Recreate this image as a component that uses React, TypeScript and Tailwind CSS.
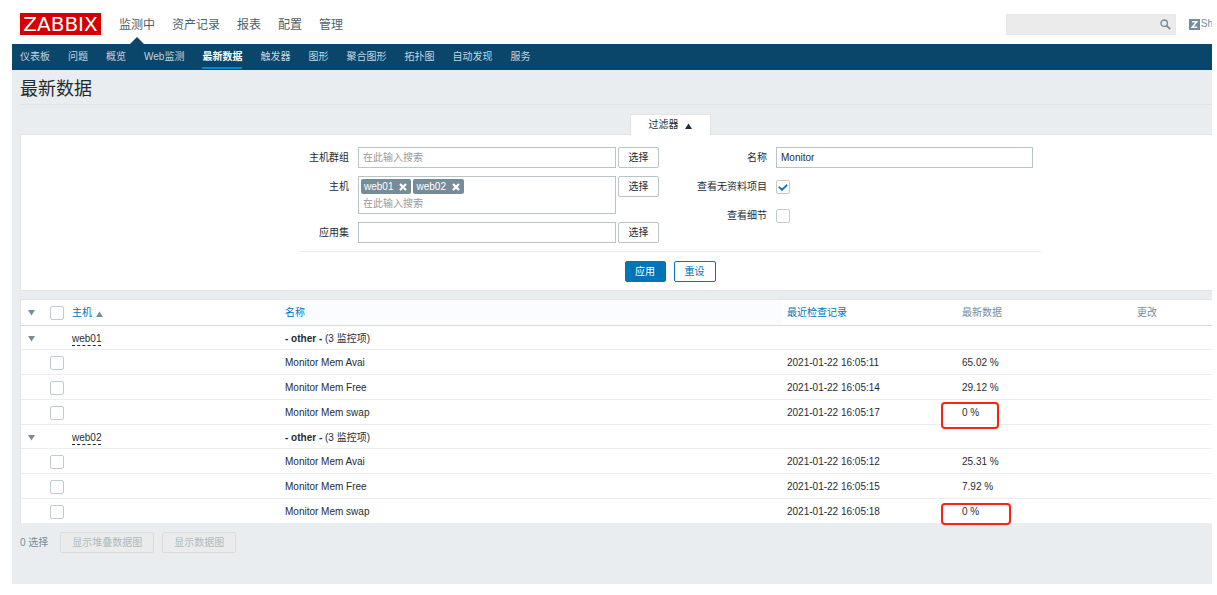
import { ReactNode, useState } from "react";
import clsx from "clsx";

const mainMenu = ["监测中", "资产记录", "报表", "配置", "管理"];

const subMenu = [
  "仪表板",
  "问题",
  "概览",
  "Web监测",
  "最新数据",
  "触发器",
  "图形",
  "聚合图形",
  "拓扑图",
  "自动发现",
  "服务",
];

interface Item {
  name: string;
  lastCheck: string;
  value: string;
  mark?: string;
}

interface HostGroup {
  host: string;
  items: Item[];
}

const groups: HostGroup[] = [
  {
    host: "web01",
    items: [
      { name: "Monitor Mem Avai", lastCheck: "2021-01-22 16:05:11", value: "65.02 %" },
      { name: "Monitor Mem Free", lastCheck: "2021-01-22 16:05:14", value: "29.12 %" },
      {
        name: "Monitor Mem swap",
        lastCheck: "2021-01-22 16:05:17",
        value: "0 %",
        mark: "-left-4 top-0.5 h-[27px] w-[58px]",
      },
    ],
  },
  {
    host: "web02",
    items: [
      { name: "Monitor Mem Avai", lastCheck: "2021-01-22 16:05:12", value: "25.31 %" },
      { name: "Monitor Mem Free", lastCheck: "2021-01-22 16:05:15", value: "7.92 %" },
      {
        name: "Monitor Mem swap",
        lastCheck: "2021-01-22 16:05:18",
        value: "0 %",
        mark: "-left-4 top-1 h-[22px] w-[70px]",
      },
    ],
  },
];

interface CheckboxProps {
  id?: string;
  label?: string;
  defaultChecked?: boolean;
}

function Checkbox({ id, label, defaultChecked }: CheckboxProps) {
  return (
    <span className="relative block size-3.5">
      <input
        id={id}
        type="checkbox"
        aria-label={label}
        defaultChecked={defaultChecked}
        className="peer block size-3.5 appearance-none rounded-xs border border-[#c0cbd1] bg-white"
      />
      <svg
        viewBox="0 0 14 14"
        className="pointer-events-none absolute inset-0 hidden size-3.5 peer-checked:block"
      >
        <path d="M2.8 6.8 6 9.7 11.2 4.9" fill="none" stroke="#0275b8" strokeWidth="1.8" />
      </svg>
    </span>
  );
}

function Triangle({ up, className }: { up?: boolean; className?: string }) {
  return (
    <svg viewBox="0 0 7 6" className={clsx("h-1.5 w-[7px] fill-current", className)}>
      <path d={up ? "M3.5 0.5 7 6H0Z" : "M0 0H7L3.5 5.5Z"} />
    </svg>
  );
}

function SelectButton() {
  return (
    <button
      type="button"
      className="h-[21px] w-[41px] rounded-xs border border-[#b8c4ca] bg-white text-[#1f2c33]"
    >
      选择
    </button>
  );
}

function HostTag({ name }: { name: string }) {
  return (
    <span className="flex h-[15px] items-center gap-1.5 rounded-xs bg-[#768d99] pr-1 pl-[3px] text-white">
      {name}
      <button type="button" aria-label={name}>
        <svg viewBox="0 0 8 8" className="size-2">
          <path d="M1 1 7 7M7 1 1 7" stroke="white" strokeWidth="2.2" />
        </svg>
      </button>
    </span>
  );
}

function FieldRow({ id, label, children }: { id: string; label: string; children: ReactNode }) {
  return (
    <div className="flex gap-[9px]">
      <label htmlFor={id} className="flex h-[21px] flex-1 items-center justify-end">
        {label}
      </label>
      {children}
    </div>
  );
}

function Header() {
  return (
    <header>
      <div className="flex h-11 items-center bg-white px-2 pt-1">
        <a
          href="#"
          className="mr-[18px] flex h-[22px] w-[81px] items-center justify-center bg-[#d40000] font-['DejaVu_Sans'] text-xl leading-none text-white"
        >
          ZABBIX
        </a>
        <nav className="flex h-10 gap-[17px] text-xs text-[#4f5f69]">
          {mainMenu.map((item, i) => (
            <a key={item} href="#" className="relative flex items-center pt-0.5">
              {item}
              {i === 0 && (
                <svg
                  viewBox="0 0 14 7"
                  className="absolute bottom-0 left-1/2 h-[7px] w-3.5 -translate-x-1/2"
                >
                  <path d="M7 0 14 7H0Z" fill="#0a466a" />
                </svg>
              )}
            </a>
          ))}
        </nav>
        <div className="mr-[107px] ml-auto flex items-center gap-[13px]">
          <form className="relative">
            <input
              type="text"
              aria-label="搜索"
              className="block h-[21px] w-[170px] border border-[#e8e8e8] bg-[#ebebeb] pr-6 pl-1"
            />
            <button type="button" aria-label="搜索" className="absolute top-[5px] right-[5px]">
              <svg viewBox="0 0 11 11" className="size-[11px]" fill="none" stroke="#768d99">
                <circle cx="4.2" cy="4.2" r="3.2" strokeWidth="1.4" />
                <path d="M6.6 6.6 10.2 10.2" strokeWidth="1.8" />
              </svg>
            </button>
          </form>
          <a href="#" className="flex items-center gap-px text-[#768d99]">
            <svg viewBox="0 0 11 11" className="size-[11px]">
              <rect width="11" height="11" fill="#768d99" />
              <path d="M3 2.8H7.8L3.2 8.2H8.2" fill="none" stroke="white" strokeWidth="1.5" />
            </svg>
            Sh
          </a>
        </div>
      </div>
      <nav className="flex h-[26px] gap-[18px] bg-[#0a466a] px-2 text-[#c3d5e0]">
        {subMenu.map((item) => (
          <a
            key={item}
            href="#"
            className={clsx(
              "mb-px flex items-center border-b-2 pt-0.5",
              item === "最新数据"
                ? "border-[#0a84cf] font-bold text-white"
                : "border-transparent"
            )}
          >
            {item}
          </a>
        ))}
      </nav>
    </header>
  );
}

function Filter() {
  const [name, setName] = useState("Monitor");
  const [open, setOpen] = useState(true);

  return (
    <section>
      <div className="flex justify-center">
        <button
          type="button"
          onClick={() => setOpen(!open)}
          className="-mb-px flex h-[21px] w-[81px] items-center justify-center gap-1.5 border border-b-0 border-[#dfe4e7] bg-white"
        >
          过滤器
          <Triangle up={open} className="mt-0.5" />
        </button>
      </div>
      {open && (
        <form className="border border-[#dfe4e7] bg-white pt-3 pb-2">
          <div className="mx-auto flex w-[742px] justify-between border-b border-[#ebeef0] pr-2 pb-2">
            <div className="flex w-[360px] flex-col gap-2">
              <FieldRow id="groups" label="主机群组">
                <div className="flex gap-0.5">
                  <input
                    id="groups"
                    type="text"
                    placeholder="在此输入搜索"
                    className="h-[21px] w-[258px] border border-[#b8c4ca] px-1 placeholder:text-[#999]"
                  />
                  <SelectButton />
                </div>
              </FieldRow>
              <FieldRow id="hosts" label="主机">
                <div className="flex items-start gap-0.5">
                  <div className="h-[38px] w-[258px] border border-[#b8c4ca] pt-0.5">
                    <div className="flex gap-0.5 px-0.5">
                      <HostTag name="web01" />
                      <HostTag name="web02" />
                    </div>
                    <input
                      id="hosts"
                      type="text"
                      placeholder="在此输入搜索"
                      className="block h-[18px] w-full px-1 placeholder:text-[#999]"
                    />
                  </div>
                  <SelectButton />
                </div>
              </FieldRow>
              <FieldRow id="application" label="应用集">
                <div className="flex gap-0.5">
                  <input
                    id="application"
                    type="text"
                    className="h-[21px] w-[258px] border border-[#b8c4ca] px-1"
                  />
                  <SelectButton />
                </div>
              </FieldRow>
            </div>
            <div className="flex w-[340px] flex-col gap-2">
              <FieldRow id="name" label="名称">
                <input
                  id="name"
                  type="text"
                  value={name}
                  onChange={(e) => setName(e.target.value)}
                  className="h-[21px] w-[257px] border border-[#b8c4ca] px-1"
                />
              </FieldRow>
              <FieldRow id="without-data" label="查看无资料项目">
                <div className="flex w-[257px] items-center">
                  <Checkbox id="without-data" defaultChecked />
                </div>
              </FieldRow>
              <FieldRow id="details" label="查看细节">
                <div className="flex w-[257px] items-center">
                  <Checkbox id="details" />
                </div>
              </FieldRow>
            </div>
          </div>
          <div className="flex justify-center gap-2 pt-[9px]">
            <button
              type="button"
              className="h-[21px] w-[41px] rounded-xs border border-[#0275b8] bg-[#0275b8] text-white"
            >
              应用
            </button>
            <button
              type="button"
              className="h-[21px] w-[42px] rounded-xs border border-[#0275b8] bg-white text-[#0275b8]"
            >
              重设
            </button>
          </div>
        </form>
      )}
    </section>
  );
}

function DataTable() {
  return (
    <table className="w-full table-fixed border-separate border-spacing-0 border border-b-0 border-[#dfe4e7] bg-white text-left [&_td]:border-b [&_td]:border-[#ebeef0] [&_td]:px-[5px] [&_td]:pt-0.5 [&_td]:pb-0 [&_th]:border-b [&_th]:border-[#d5dce0] [&_th]:px-[5px] [&_th]:py-0 [&_th]:font-normal">
      <colgroup>
        <col className="w-6" />
        <col className="w-[22px]" />
        <col className="w-[213px]" />
        <col />
        <col className="w-[175px]" />
        <col className="w-[175px]" />
        <col className="w-[187px]" />
      </colgroup>
      <thead>
        <tr className="h-[26px] text-[#768d99]">
          <th>
            <Triangle className="ml-0.5" />
          </th>
          <th>
            <Checkbox label="全选" />
          </th>
          <th>
            <a href="#" className="flex items-center gap-1 text-[#0275b8]">
              主机
              <Triangle up className="mt-0.5 text-[#768d99]" />
            </a>
          </th>
          <th className="bg-[#fafcff]">
            <a href="#" className="text-[#0275b8]">
              名称
            </a>
          </th>
          <th>
            <a href="#" className="text-[#0275b8]">
              最近检查记录
            </a>
          </th>
          <th>最新数据</th>
          <th>更改</th>
        </tr>
      </thead>
      {groups.map((group) => (
        <tbody key={group.host}>
          <tr className="h-6">
            <td>
              <button type="button" aria-label={group.host} className="block text-[#768d99]">
                <Triangle className="ml-0.5" />
              </button>
            </td>
            <td />
            <td>
              <a href="#" className="inline-block border-b border-dashed border-[#1f2c33] leading-3">
                {group.host}
              </a>
            </td>
            <td colSpan={4}>
              <b>- other -</b> ({group.items.length} 监控项)
            </td>
          </tr>
          {group.items.map((item) => (
            <tr key={item.name} className="h-[25px]">
              <td />
              <td>
                <Checkbox label={item.name} />
              </td>
              <td />
              <td>{item.name}</td>
              <td>{item.lastCheck}</td>
              <td className="relative">
                {item.value}
                {item.mark && (
                  <span
                    className={clsx("absolute z-10 rounded-sm border-2 border-[#fd2212]", item.mark)}
                  />
                )}
              </td>
              <td />
            </tr>
          ))}
        </tbody>
      ))}
    </table>
  );
}

export default function App() {
  return (
    <div className="mr-[5px] ml-3 overflow-hidden font-['Liberation_Sans','Noto_Sans_CJK_SC',sans-serif] text-[10px] leading-[14px] text-[#1f2c33]">
      {/* the page keeps its minimum width and is cut off in narrow windows */}
      <div className="min-w-[1316px] bg-[#e9edf0]">
        <Header />
        <main className="px-2 pb-[31px]">
          <h1 className="mb-[9px] flex h-[35px] items-center border-b border-[#dfe4e7] pt-1 text-lg leading-6">
            最新数据
          </h1>
          <Filter />
          <div className="mt-2">
            <DataTable />
          </div>
          <div className="mt-2 flex items-center text-[#768d99]">
            <span className="mr-3">0 选择</span>
            <button
              type="button"
              disabled
              className="mr-2 h-[21px] rounded-xs border border-[#d6dde0] bg-[#ebebeb] px-[11px] text-[#acbbc2]"
            >
              显示堆叠数据图
            </button>
            <button
              type="button"
              disabled
              className="h-[21px] rounded-xs border border-[#d6dde0] bg-[#ebebeb] px-[11px] text-[#acbbc2]"
            >
              显示数据图
            </button>
          </div>
        </main>
      </div>
    </div>
  );
}
